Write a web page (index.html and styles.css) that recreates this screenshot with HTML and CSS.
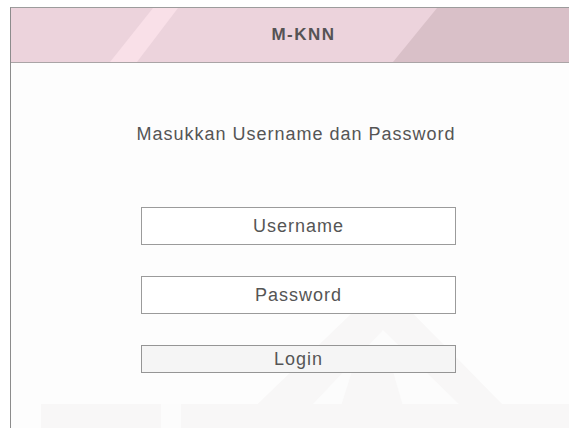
FILE: index.html
```html
<!DOCTYPE html>
<html lang="id">
<head>
<meta charset="utf-8">
<title>M-KNN</title>
<link rel="stylesheet" href="styles.css">
</head>
<body>
<div class="frame">
  <svg class="watermark" width="575" height="421" viewBox="0 0 575 421" aria-hidden="true">
    <!-- faint roof emblem behind the form -->
    <polygon points="372,275 232,410 505,410" fill="#f8f7f7"/>
    <polygon points="372,322 300,398 330,398 342,360 381,360 392,398 450,398" fill="#fcfcfc"/>
    <rect x="30" y="396" width="545" height="30" fill="#f8f7f7"/>
    <rect x="150" y="396" width="20" height="30" fill="#fcfcfc"/>
  </svg>
  <header class="topbar">
    <svg class="topbar-art" width="575" height="54" viewBox="0 0 575 54" aria-hidden="true">
      <polygon points="142,0 167,0 126,54 99,54" fill="#f9e0e8"/>
      <polygon points="426,0 575,0 575,54 382,54" fill="#d9c0c8"/>
    </svg>
    <span class="brand">M-KNN</span>
  </header>
  <main class="content">
    <p class="prompt">Masukkan Username dan Password</p>
    <form class="login-form">
      <div class="field">Username</div>
      <div class="field">Password</div>
      <div class="field button">Login</div>
    </form>
  </main>
</div>
</body>
</html>
```

FILE: styles.css
```css
html, body {
  margin: 0;
  padding: 0;
  background: #ffffff;
  overflow: hidden;
}

body {
  font-family: "Liberation Sans", Arial, sans-serif;
  color: #555555;
}

.frame {
  position: relative;
  margin: 7px 0 0 10px;
  width: 575px;
  height: 421px;
  border-top: 1px solid #9c9c9c;
  border-left: 1px solid #8c8c8c;
  background: #fdfdfd;
}

.watermark {
  position: absolute;
  left: 0;
  top: 0;
  z-index: 0;
}

.topbar {
  position: relative;
  z-index: 1;
  height: 54px;
  background: #ecd3dc;
  border-bottom: 1px solid #aaa4a6;
  display: flex;
  align-items: center;
  justify-content: center;
}

.topbar-art {
  position: absolute;
  left: 0;
  top: 0;
}

.brand {
  position: relative;
  font-weight: bold;
  font-size: 17px;
  letter-spacing: 1.5px;
  color: #555355;
  margin-left: 10px;
}

.content {
  position: relative;
  z-index: 1;
  display: flex;
  flex-direction: column;
  align-items: center;
}

.prompt {
  margin: 61px 0 0 -5px;
  font-size: 18px;
  line-height: 20px;
  letter-spacing: 1px;
}

.login-form {
  margin-top: 63px;
  display: flex;
  flex-direction: column;
  gap: 31px;
}

.field {
  box-sizing: border-box;
  width: 315px;
  height: 38px;
  border: 1px solid #9b9b9b;
  background: #ffffff;
  display: flex;
  align-items: center;
  justify-content: center;
  font-size: 18px;
  letter-spacing: 1px;
}

.field.button {
  height: 28px;
  background: #f5f5f5;
  border-color: #959595;
}
```
